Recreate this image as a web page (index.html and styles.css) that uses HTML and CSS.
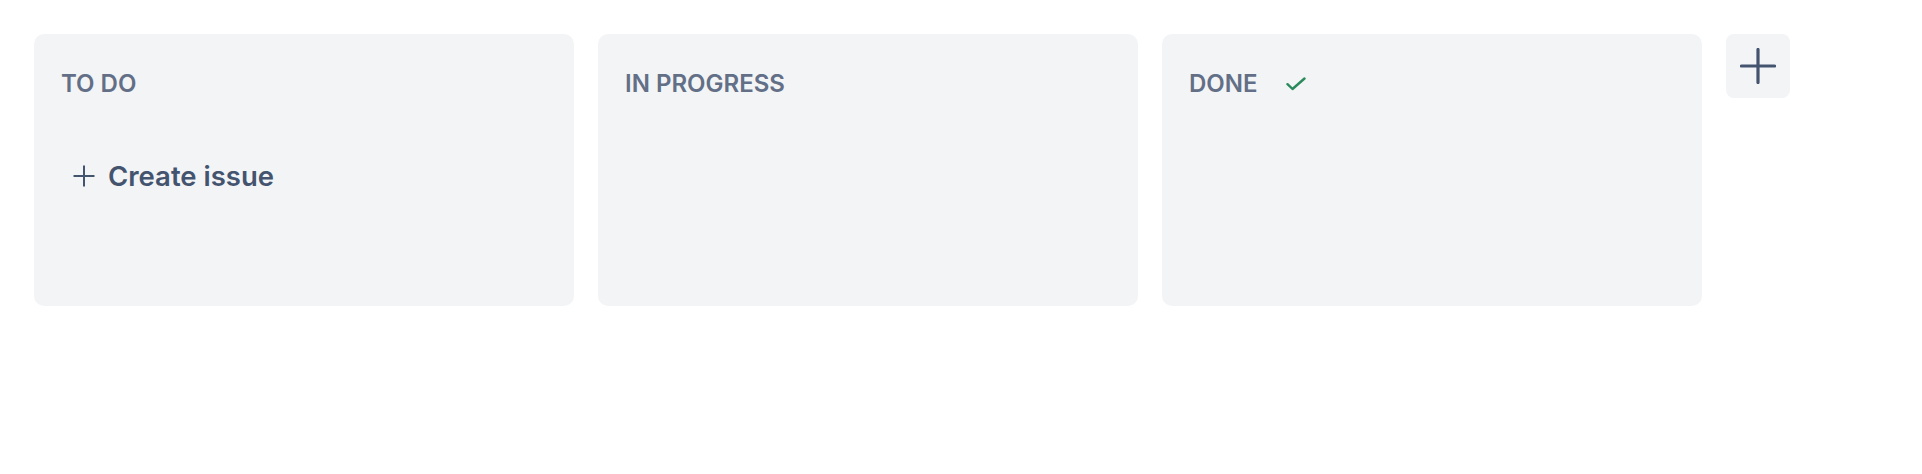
FILE: index.html
```html
<!DOCTYPE html>
<html>
<head>
<meta charset="utf-8">
<link rel="stylesheet" href="styles.css">
</head>
<body>
<div class="board">
  <div class="column">
    <div class="col-header"><span class="col-title">TO DO</span></div>
    <button class="create">
      <svg class="create-icon" viewBox="0 0 24 24" width="24" height="24"><path d="M12 1.5v21M1.5 12h21" stroke="#44546F" stroke-width="2" fill="none"/></svg>
      <span>Create issue</span>
    </button>
  </div>
  <div class="column">
    <div class="col-header"><span class="col-title">IN PROGRESS</span></div>
  </div>
  <div class="column">
    <div class="col-header"><span class="col-title">DONE</span>
      <svg class="check" viewBox="0 0 20 14" width="20" height="14"><path d="M1.5 7.2l5 4.8L18.5 1.5" stroke="#2A8A5C" stroke-width="2.4" fill="none" stroke-linecap="round" stroke-linejoin="round"/></svg>
    </div>
  </div>
  <button class="add-col">
    <svg viewBox="0 0 36 36" width="36" height="36"><path d="M18 1.5v33M1.5 18h33" stroke="#44546F" stroke-width="3.2" fill="none" stroke-linecap="round"/></svg>
  </button>
</div>
</body>
</html>
```
FILE: styles.css
```css
html, body {
  margin: 0;
  padding: 0;
  background: #ffffff;
  font-family: Inter, "Noto Sans", sans-serif;
}
.board {
  display: flex;
  align-items: flex-start;
  gap: 24px;
  padding: 34px;
}
.column {
  width: 540px;
  height: 272px;
  background: #F3F4F6;
  border-radius: 10px;
  box-sizing: border-box;
  padding: 36px 27px 0;
}
.col-header {
  display: flex;
  align-items: center;
  height: 28px;
}
.col-title {
  font-size: 24px;
  font-weight: 600;
  color: #626F86;
  line-height: 28px;
}
.check {
  margin-left: 28px;
}
.create {
  display: flex;
  align-items: center;
  gap: 12px;
  height: 32px;
  margin-top: 62px;
  margin-left: 11px;
  padding: 0;
  border: none;
  background: none;
  font-family: inherit;
  font-size: 27.5px;
  font-weight: 600;
  line-height: 32px;
  color: #44546F;
  cursor: pointer;
}
.add-col {
  width: 64px;
  height: 64px;
  border: none;
  border-radius: 8px;
  background: #F3F4F6;
  display: flex;
  align-items: center;
  justify-content: center;
  padding: 0;
}
```
